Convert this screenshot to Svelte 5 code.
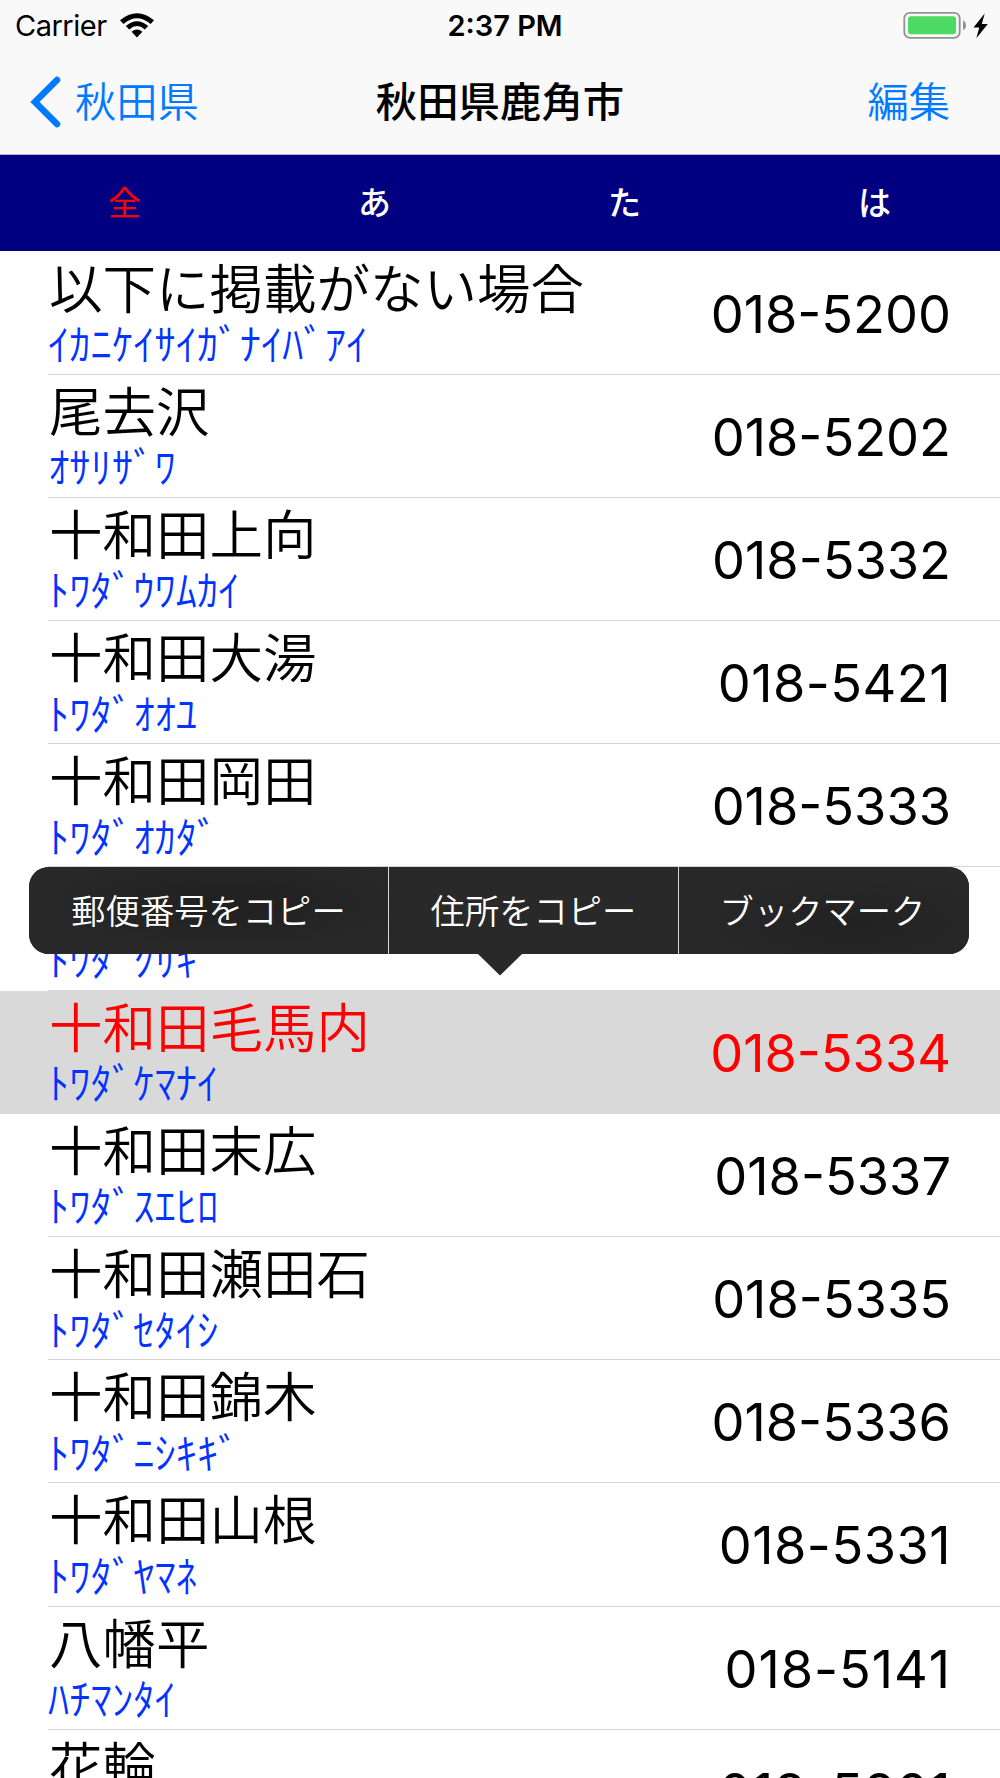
<script>
  const tabs = ['全', 'あ', 'た', 'は'];
  const actions = ['郵便番号をコピー', '住所をコピー', 'ブックマーク'];
  const places = [
    { name: '以下に掲載がない場合', kana: 'ｲｶﾆｹｲｻｲｶﾞﾅｲﾊﾞｱｲ', code: '018-5200' },
    { name: '尾去沢', kana: 'ｵｻﾘｻﾞﾜ', code: '018-5202' },
    { name: '十和田上向', kana: 'ﾄﾜﾀﾞｳﾜﾑｶｲ', code: '018-5332' },
    { name: '十和田大湯', kana: 'ﾄﾜﾀﾞｵｵﾕ', code: '018-5421' },
    { name: '十和田岡田', kana: 'ﾄﾜﾀﾞｵｶﾀﾞ', code: '018-5333' },
    { name: '', kana: 'ﾄﾜﾀﾞｸﾘｷ', code: '' },
    { name: '十和田毛馬内', kana: 'ﾄﾜﾀﾞｹﾏﾅｲ', code: '018-5334', selected: true },
    { name: '十和田末広', kana: 'ﾄﾜﾀﾞｽｴﾋﾛ', code: '018-5337' },
    { name: '十和田瀬田石', kana: 'ﾄﾜﾀﾞｾﾀｲｼ', code: '018-5335' },
    { name: '十和田錦木', kana: 'ﾄﾜﾀﾞﾆｼｷｷﾞ', code: '018-5336' },
    { name: '十和田山根', kana: 'ﾄﾜﾀﾞﾔﾏﾈ', code: '018-5331' },
    { name: '八幡平', kana: 'ﾊﾁﾏﾝﾀｲ', code: '018-5141' },
    { name: '花輪', kana: 'ﾊﾅﾜ', code: '018-5201' }
  ];

  // The digit 1 is narrow, so codes with more of them are tracked wider.
  const tracking = (code) => (code.slice(4).split('1').length - 1) * 0.48;
</script>

<div class="screen">
  <header>
    <div class="status">
      <div class="carrier">
        <span>Carrier</span>
        <svg width="34" height="25" viewBox="0 0 34 25">
          <path d="M0 7.3Q17-6.8 34 7.3L30.6 10.9Q17-.3 3.4 10.9Z" />
          <path d="M5.8 13.1Q17 3.2 28.2 13.1L24.8 16.5Q17 9.7 9.2 16.5Z" />
          <path d="M11.6 18.7Q17 14.3 22.4 18.7L17 24.4Z" />
        </svg>
      </div>
      <time>2:37 PM</time>
      <div class="power">
        <svg width="86" height="28" viewBox="0 0 86 28">
          <rect x="1.3" y="1.8" width="55.4" height="25" rx="5.5" fill="none" stroke="#929292" stroke-width="1.8" />
          <rect x="5" y="5.2" width="48" height="18" rx="3" fill="#4cd964" />
          <path d="M60 9.5Q63 11 63 14.3T60 19.2Z" fill="#929292" />
          <path d="M81.7 2.5 70.5 16.5H76.3L73.3 27.3 84.8 12.9H78.8Z" fill="#000" />
        </svg>
      </div>
    </div>
    <nav>
      <div class="back">
        <svg width="32" height="52" viewBox="0 0 32 52">
          <path d="M27 4 5 26 27 48" fill="none" stroke="#007aff" stroke-width="6.6" stroke-linecap="round" />
        </svg>
        <span>秋田県</span>
      </div>
      <h1>秋田県鹿角市</h1>
      <span class="edit">編集</span>
    </nav>
  </header>
  <div class="tabs">
    {#each tabs as tab, i}
      <span class:active={i === 0}>{tab}</span>
    {/each}
  </div>
  <main>
    {#each places as place}
      <div class="row" class:selected={place.selected}>
        <div class="line">
          <div class="place">
            <div class="name">{place.name}</div>
            <div class="kana">{place.kana}</div>
          </div>
          <div class="code" style:letter-spacing="{tracking(place.code)}px">{place.code}</div>
        </div>
      </div>
    {/each}
  </main>
  <div class="menu">
    {#each actions as action}
      <span>{action}</span>
    {/each}
    <svg width="44" height="22" viewBox="0 0 44 22"><path d="M0 0H44L22 21.5Z" fill="#292929" /></svg>
  </div>
</div>

<style>
  :global(body) { margin: 0; background: #fff; }
  .screen {
    position: relative;
    display: flex;
    flex-direction: column;
    width: 1000px;
    height: 1778px;
    overflow: hidden;
    font-family: Inter, "Noto Sans CJK JP", sans-serif;
    color: #000;
  }
  svg { display: block; flex: none; }
  header {
    box-sizing: border-box;
    height: 155px;
    background: #f9f9f9;
    border-bottom: 1px solid #b2b2cc;
    flex: none;
  }
  .status, nav { display: grid; grid-template-columns: 1fr auto 1fr; align-items: center; }
  .status { height: 49px; font-size: 29px; line-height: 49px; }
  .carrier { display: flex; align-items: center; gap: 13.5px; padding-left: 15px; letter-spacing: -0.5px; }
  .carrier span { padding-top: 1px; }
  time { font-weight: 600; font-size: 29px; letter-spacing: 0; padding: 1px 0 0 10px; }
  .power { justify-self: end; padding-right: 11px; }
  nav { height: 105px; font-size: 41.3px; line-height: 60px; }
  .back { display: flex; align-items: center; gap: 13px; padding-left: 30px; color: #007aff; }
  h1 { margin: 0; font-size: 41.4px; font-weight: 500; }
  .edit { justify-self: end; color: #007aff; padding-right: 50px; }
  .back span, .edit { font-weight: 350; }
  .tabs {
    display: grid;
    grid-template-columns: repeat(4, 1fr);
    height: 96px;
    flex: none;
    background: #000080;
    color: #fff;
    font-size: 33px;
    line-height: 97px;
    text-align: center;
    font-weight: 500;
  }
  .tabs span { padding-right: 1px; }
  .tabs .active { color: #f00; font-weight: 400; }
  main { padding-top: 0.5px; }
  .row { box-sizing: border-box; height: 123.2px; padding-left: 48px; }
  .line {
    box-sizing: border-box;
    display: flex;
    justify-content: space-between;
    height: 100%;
    padding-right: 49px;
    border-bottom: 1px solid #d5d5d8;
  }
  .selected { background: #d9d9d9; }
  .selected .line { border-color: #d9d9d9; }
  .name { height: 66.5px; padding: 8px 0 0 1px; box-sizing: border-box; font-size: 53.5px; line-height: 60px; font-weight: 350; }
  .kana { font-size: 42.6px; line-height: 54px; color: #0433ff; font-weight: 350; }
  .code { font-size: 52.3px; line-height: 124px; font-kerning: none; font-weight: 380; }
  .selected .name, .selected .code { color: #f00; }
  .menu {
    position: absolute;
    left: 29px;
    top: 867px;
    width: 940px;
    height: 87px;
    display: grid;
    grid-template-columns: 360px 290px 1fr;
    background: #292929;
    border-radius: 20px;
    color: #fff;
    font-size: 34.3px;
    line-height: 89px;
    text-align: center;
    font-weight: 350;
  }
  .menu span { border-right: 1px solid #d6d6d6; height: 87px; }
  .menu span:first-child { background: radial-gradient(ellipse at 55% 40%, #202020, #292929 75%); border-radius: 20px 0 0 20px; }
  .menu span:nth-child(3) { background: radial-gradient(ellipse at 60% 65%, #222, #292929 75%); border-radius: 0 20px 20px 0; border: 0; padding-right: 3px; }
  .menu svg { position: absolute; left: 449px; top: 87px; }
</style>
